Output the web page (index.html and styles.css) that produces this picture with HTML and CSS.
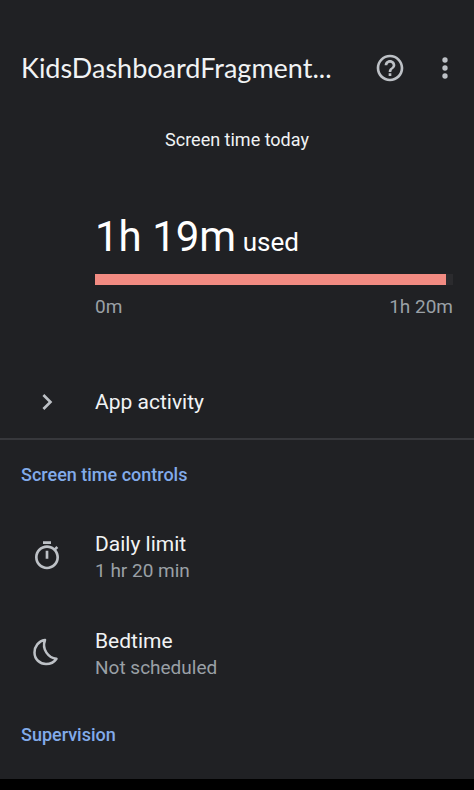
FILE: index.html
```html
<!DOCTYPE html>
<html lang="en">
<head>
<meta charset="utf-8">
<meta name="viewport" content="width=device-width, initial-scale=1">
<title>Screen time</title>
<link rel="stylesheet" href="styles.css">
</head>
<body>
<div class="screen">
  <header class="app-bar">
    <h1 class="title">KidsDashboardFragment...</h1>
    <button class="icon-button" type="button" aria-label="Help">
      <svg class="icon" viewBox="0 0 24 24"><path d="M11 18h2v-2h-2v2zm1-16C6.480 2 2 6.480 2 12s4.480 10 10 10 10-4.480 10-10S17.520 2 12 2zm0 18c-4.410 0-8-3.590-8-8s3.590-8 8-8 8 3.590 8 8-3.590 8-8 8zm0-14c-2.210 0-4 1.790-4 4h2c0-1.100.9-2 2-2s2 .9 2 2c0 2-3 1.750-3 5h2c0-2.250 3-2.500 3-5 0-2.210-1.790-4-4-4z"/></svg>
    </button>
    <button class="icon-button" type="button" aria-label="More options">
      <svg class="icon" viewBox="0 0 24 24"><circle cx="12" cy="6" r="2"/><circle cx="12" cy="12" r="2"/><circle cx="12" cy="18" r="2"/></svg>
    </button>
  </header>
  <main class="content">
    <section class="summary">
      <h2 class="summary-title">Screen time today</h2>
      <div class="usage">
        <p class="used"><span class="used-time">1h 19m</span> used</p>
        <div class="track" role="progressbar" aria-label="Screen time used" aria-valuemin="0" aria-valuemax="80" aria-valuenow="79"><div class="fill"></div></div>
        <div class="scale"><span>0m</span><span>1h 20m</span></div>
      </div>
    </section>
    <button class="row activity" type="button">
      <svg class="icon" viewBox="0 0 24 24"><path d="M8.590 16.590 13.170 12 8.590 7.410 10 6l6 6-6 6z"/></svg>
      <span class="row-title">App activity</span>
    </button>
    <section class="group">
      <h2 class="group-title">Screen time controls</h2>
      <button class="row" type="button">
        <svg class="icon" viewBox="0 0 24 24"><path d="M15 1H9v2h6V1zm-4 13h2V8h-2v6zm8.030-6.610 1.420-1.420c-.43-.51-.9-.99-1.410-1.410l-1.420 1.420C16.070 4.740 14.120 4 12 4c-4.970 0-9 4.030-9 9s4.020 9 9 9 9-4.030 9-9c0-2.120-.74-4.070-1.970-5.610zM12 20c-3.870 0-7-3.130-7-7s3.130-7 7-7 7 3.130 7 7-3.130 7-7 7z"/></svg>
        <span class="row-text"><span class="row-title">Daily limit</span><span class="row-note">1 hr 20 min</span></span>
      </button>
      <button class="row" type="button">
        <svg class="icon" viewBox="1 1 32 32"><path class="line" d="M15 4C8.500 5 4.500 10.500 4.500 16.500C4.500 23.200 9.700 28 16 28C20.400 28 24.300 26 26.500 22.700C18.500 22 11.500 13.500 15 4Z"/></svg>
        <span class="row-text"><span class="row-title">Bedtime</span><span class="row-note">Not scheduled</span></span>
      </button>
    </section>
    <section class="group last">
      <h2 class="group-title">Supervision</h2>
    </section>
  </main>
  <footer class="system-bar"></footer>
</div>
</body>
</html>
```
FILE: styles.css
```css
* {
  box-sizing: border-box;
}

body {
  margin: 0;
  background: #202124;
  color: #f1f3f4;
  font-family: Roboto, "Liberation Sans", sans-serif;
}

h1, h2, p {
  margin: 0;
  font-weight: 400;
}

button {
  border: 0;
  padding: 0;
  background: none;
  color: inherit;
  font: inherit;
  text-align: left;
  cursor: pointer;
}

.screen {
  display: flex;
  flex-direction: column;
  min-height: 100vh;
}

.app-bar {
  display: flex;
  align-items: center;
  gap: 23px;
  padding: 48px 13px 0 21px;
}

.title {
  flex: 1;
  min-width: 0;
  overflow: hidden;
  white-space: nowrap;
  font-family: Lato, Roboto, sans-serif;
  font-size: 27px;
  line-height: 40px;
}

.icon-button {
  display: flex;
}

.icon {
  display: block;
  flex: none;
  width: 32px;
  height: 32px;
  fill: #bdc1c6;
}

.line {
  fill: none;
  stroke: #bdc1c6;
  stroke-width: 2.5;
  stroke-linejoin: round;
}

.content {
  flex: 1;
}

.summary-title {
  padding-top: 40px;
  text-align: center;
  font-size: 18px;
  line-height: 24px;
}

.usage {
  padding: 60px 21px 0 95px;
}

.used {
  font-size: 26px;
  line-height: 50px;
  color: #fff;
}

.used-time {
  font-size: 42px;
}

.track {
  height: 11px;
  margin-top: 7px;
  background: #2b2b2e;
}

.fill {
  width: 98%;
  height: 100%;
  background: #f28b82;
}

.scale {
  display: flex;
  justify-content: space-between;
  margin-top: 10px;
  font-size: 19px;
  line-height: 24px;
  color: #9aa0a6;
}

.row {
  display: flex;
  align-items: center;
  gap: 32px;
  width: 100%;
  height: 97px;
  padding: 0 21px 0 31px;
}

.activity {
  height: 73px;
  margin-top: 46px;
}

.row-text {
  display: flex;
  flex-direction: column;
  padding-top: 3px;
}

.row-title {
  font-size: 21px;
  line-height: 28px;
}

.row-note {
  font-size: 19px;
  line-height: 26px;
  color: #9aa0a6;
}

.group {
  padding-top: 23px;
  border-top: 2px solid #37383c;
}

.group-title {
  padding: 0 21px 20px;
  font-size: 18px;
  font-weight: 500;
  line-height: 24px;
  color: #82abea;
}

.last {
  padding-top: 22px;
  border-top: 0;
}

.system-bar {
  height: 11px;
  background: #000;
}
```
